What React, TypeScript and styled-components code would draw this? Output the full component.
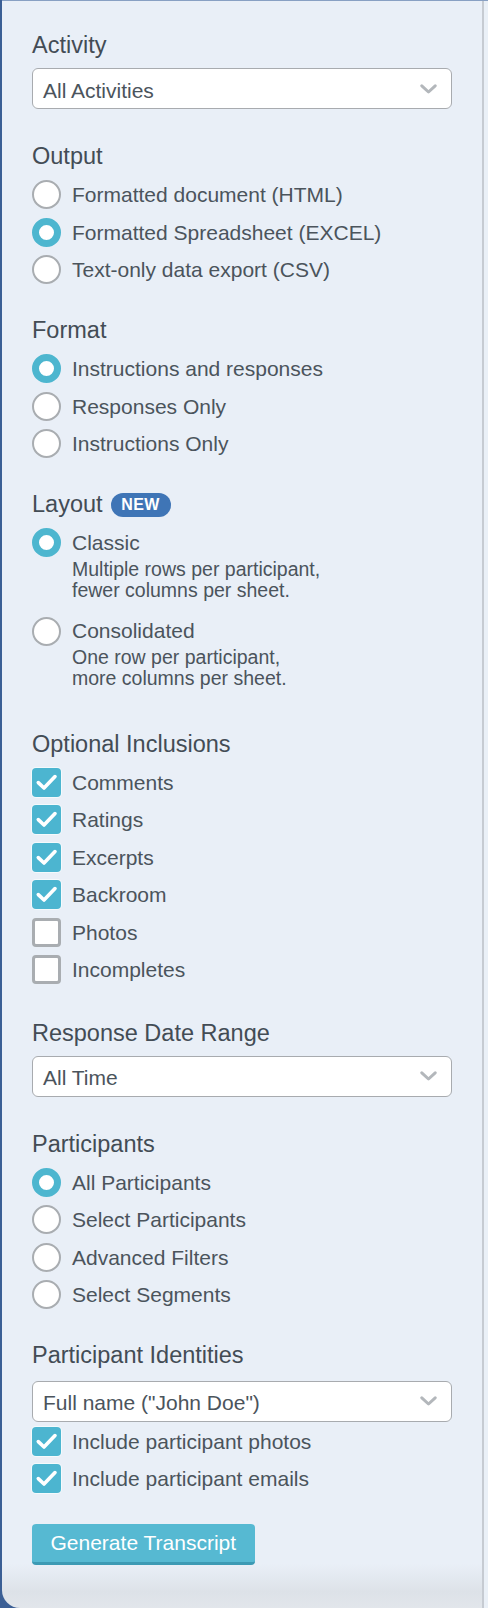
import React from "react";
import styled, { createGlobalStyle } from "styled-components";

const GlobalStyle = createGlobalStyle`
  html, body {
    margin: 0;
    padding: 0;
    background: #3b5f95;
  }
  * {
    box-sizing: border-box;
  }
`;

const Page = styled.div`
  display: flex;
  height: 1608px;
  padding-left: 2px;
  font-family: "Liberation Sans", Arial, sans-serif;
`;

const Panel = styled.div`
  flex: 1;
  display: flex;
  border-top: 1px solid #88a0c3;
  border-bottom-left-radius: 18px;
  overflow: hidden;
  background: linear-gradient(
    to bottom,
    #e9eff7 0,
    #e9eff7 calc(100% - 44px),
    #dde2e8 calc(100% - 16px),
    #e2e6eb 100%
  );
`;

const Content = styled.div`
  flex: 1;
  display: flex;
  flex-direction: column;
  align-items: stretch;
  padding: 30px 30px 0 30px;
`;

const Gutter = styled.div`
  width: 6px;
  border-left: 2px solid #c6cbd2;
  background: #eaf0f7;
`;

const Section = styled.section<{ $mb?: number }>`
  display: flex;
  flex-direction: column;
  margin-bottom: ${(p) => p.$mb ?? 27.5}px;
`;

const Heading = styled.h3`
  display: flex;
  align-items: center;
  gap: 8px;
  margin: 0 0 6px;
  height: 28px;
  line-height: 28px;
  font-size: 23.5px;
  font-weight: 400;
  color: #434c55;
`;

const Badge = styled.span`
  display: inline-flex;
  align-items: center;
  justify-content: center;
  width: 60px;
  height: 24px;
  margin-top: 1px;
  border-radius: 12px;
  background: #3f75b6;
  color: #ffffff;
  font-size: 16px;
  font-weight: 700;
  letter-spacing: 0.4px;
  line-height: 24px;
`;

const SelectBox = styled.div<{ $mt?: number; $mb?: number }>`
  display: flex;
  align-items: center;
  justify-content: space-between;
  height: 41px;
  margin: ${(p) => p.$mt ?? 3}px 0 ${(p) => p.$mb ?? 5.5}px;
  padding: 4px 14px 0 10px;
  background: #ffffff;
  border: 1px solid #a8abaf;
  border-radius: 6px;
  font-size: 21px;
  color: #4b545c;
`;

const Chevron = () => (
  <svg width="17" height="10" viewBox="0 0 17 10" style={{ marginTop: -4 }}>
    <path
      d="M1.8 1.8 L8.5 8 L15.2 1.8"
      fill="none"
      stroke="#b3b7bb"
      strokeWidth="3"
      strokeLinecap="round"
      strokeLinejoin="round"
    />
  </svg>
);

const OptionRow = styled.div<{ $mb?: number }>`
  display: flex;
  align-items: flex-start;
  gap: 11px;
  margin-bottom: ${(p) => p.$mb ?? 0}px;
`;

const MarkSlot = styled.div`
  display: flex;
  align-items: center;
  height: 37.5px;
  flex: 0 0 29px;
`;

const RadioMark = styled.span<{ $checked?: boolean }>`
  display: block;
  width: 29px;
  height: 29px;
  border-radius: 50%;
  background: #ffffff;
  border: ${(p) => (p.$checked ? "7px solid #4db6cf" : "2.5px solid #a9adb1")};
`;

const CheckMark = styled.span<{ $checked?: boolean }>`
  display: flex;
  align-items: center;
  justify-content: center;
  width: 29px;
  height: 29px;
  border-radius: 4px;
  background: ${(p) => (p.$checked ? "#4cb5d0" : "#ffffff")};
  border: ${(p) => (p.$checked ? "none" : "3px solid #a9adb1")};
  box-shadow: ${(p) => (p.$checked ? "0 0 0 1px #f4fafc" : "none")};
`;

const TextCol = styled.div`
  display: flex;
  flex-direction: column;
`;

const OptionLabel = styled.span`
  display: block;
  height: 37.5px;
  line-height: 37.5px;
  font-size: 21px;
  color: #4b545c;
  white-space: nowrap;
`;

const Description = styled.p`
  margin: -3px 0 0;
  font-size: 19.5px;
  line-height: 21.5px;
  color: #4b545c;
`;

const GenerateButton = styled.button`
  align-self: flex-start;
  margin-top: 26.5px;
  height: 41px;
  padding: 0 18.5px;
  border: none;
  border-bottom: 3px solid #3c9ab4;
  border-radius: 4px;
  background: #56b9d2;
  color: #ffffff;
  font-family: inherit;
  font-size: 21px;
  line-height: 38px;
  cursor: pointer;
`;

const Tick = () => (
  <svg width="29" height="29" viewBox="0 0 29 29">
    <path
      d="M6.3 14.6 L12 20 L23 8.6"
      fill="none"
      stroke="#ffffff"
      strokeWidth="3.6"
      strokeLinecap="round"
      strokeLinejoin="round"
    />
  </svg>
);

type Opt = { label: string; checked?: boolean; desc?: string[] };

function RadioList({ items }: { items: Opt[] }) {
  return (
    <>
      {items.map((it) => (
        <OptionRow key={it.label} $mb={it.desc ? 10.75 : 0}>
          <MarkSlot>
            <RadioMark $checked={it.checked} />
          </MarkSlot>
          <TextCol>
            <OptionLabel>{it.label}</OptionLabel>
            {it.desc && (
              <Description>
                {it.desc[0]}
                <br />
                {it.desc[1]}
              </Description>
            )}
          </TextCol>
        </OptionRow>
      ))}
    </>
  );
}

function CheckList({ items }: { items: Opt[] }) {
  return (
    <>
      {items.map((it) => (
        <OptionRow key={it.label}>
          <MarkSlot>
            <CheckMark $checked={it.checked}>{it.checked && <Tick />}</CheckMark>
          </MarkSlot>
          <OptionLabel>{it.label}</OptionLabel>
        </OptionRow>
      ))}
    </>
  );
}

export default function App() {
  return (
    <>
      <GlobalStyle />
      <Page>
        <Panel>
          <Content>
            <Section>
              <Heading>Activity</Heading>
              <SelectBox>
                <span>All Activities</span>
                <Chevron />
              </SelectBox>
            </Section>

            <Section>
              <Heading>Output</Heading>
              <RadioList
                items={[
                  { label: "Formatted document (HTML)" },
                  { label: "Formatted Spreadsheet (EXCEL)", checked: true },
                  { label: "Text-only data export (CSV)" },
                ]}
              />
            </Section>

            <Section>
              <Heading>Format</Heading>
              <RadioList
                items={[
                  { label: "Instructions and responses", checked: true },
                  { label: "Responses Only" },
                  { label: "Instructions Only" },
                ]}
              />
            </Section>

            <Section $mb={29}>
              <Heading>
                Layout <Badge>NEW</Badge>
              </Heading>
              <RadioList
                items={[
                  {
                    label: "Classic",
                    checked: true,
                    desc: ["Multiple rows per participant,", "fewer columns per sheet."],
                  },
                  {
                    label: "Consolidated",
                    desc: ["One row per participant,", "more columns per sheet."],
                  },
                ]}
              />
            </Section>

            <Section $mb={30}>
              <Heading>Optional Inclusions</Heading>
              <CheckList
                items={[
                  { label: "Comments", checked: true },
                  { label: "Ratings", checked: true },
                  { label: "Excerpts", checked: true },
                  { label: "Backroom", checked: true },
                  { label: "Photos" },
                  { label: "Incompletes" },
                ]}
              />
            </Section>

            <Section>
              <Heading>Response Date Range</Heading>
              <SelectBox>
                <span>All Time</span>
                <Chevron />
              </SelectBox>
            </Section>

            <Section>
              <Heading>Participants</Heading>
              <RadioList
                items={[
                  { label: "All Participants", checked: true },
                  { label: "Select Participants" },
                  { label: "Advanced Filters" },
                  { label: "Select Segments" },
                ]}
              />
            </Section>

            <Section $mb={0}>
              <Heading>Participant Identities</Heading>
              <SelectBox $mt={5.5} $mb={1}>
                <span>Full name ("John Doe")</span>
                <Chevron />
              </SelectBox>
              <CheckList
                items={[
                  { label: "Include participant photos", checked: true },
                  { label: "Include participant emails", checked: true },
                ]}
              />
            </Section>

            <GenerateButton type="button">Generate Transcript</GenerateButton>
          </Content>
          <Gutter />
        </Panel>
      </Page>
    </>
  );
}
